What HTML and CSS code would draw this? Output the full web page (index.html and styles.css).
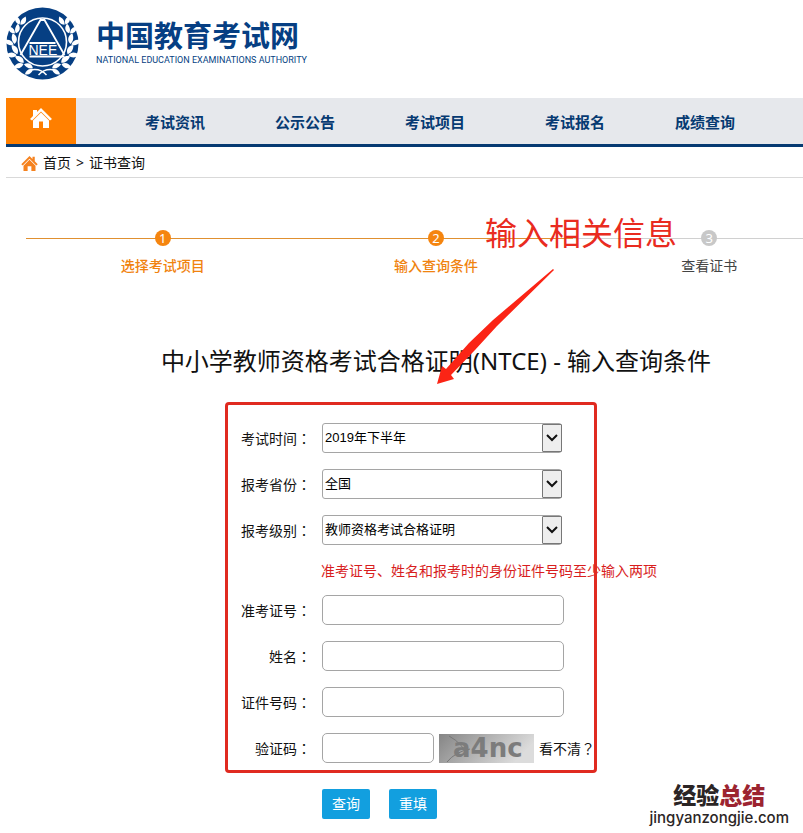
FILE: index.html
```html
<!DOCTYPE html>
<html lang="zh-CN">
<head>
<meta charset="utf-8">
<title>中国教育考试网 - 证书查询</title>
<link rel="stylesheet" href="styles.css">
</head>
<body>
<div class="page">
  <header class="header">
    <svg class="logo" viewBox="0 0 73 73" aria-hidden="true">
      <defs>
        <g id="leaf">
          <path d="M0 0C-5-1-6-5-4-9C-1-7 1-4 0 0Z"/>
          <path d="M1 0C0-4 2-7 6-8C7-4 5-1 1 0Z"/>
        </g>
        <g id="branch" fill="#fff">
          <use href="#leaf" transform="rotate(160) translate(0 -28) rotate(-70)"/>
          <use href="#leaf" transform="rotate(138) translate(0 -28) rotate(-60) scale(1.1)"/>
          <use href="#leaf" transform="rotate(116) translate(0 -28) rotate(-60) scale(1.1)"/>
          <use href="#leaf" transform="rotate(94) translate(0 -28) rotate(-60) scale(1.1)"/>
          <use href="#leaf" transform="rotate(72) translate(0 -28) rotate(-60)"/>
          <use href="#leaf" transform="rotate(52) translate(0 -28) rotate(-60)"/>
          <path d="M-4 33Q2 26 12 28" fill="none" stroke="#fff" stroke-width="1.4"/>
        </g>
      </defs>
      <circle cx="36.500" cy="36.500" r="36" fill="#063f83"/>
      <g transform="translate(36.5 35)">
        <use href="#branch"/>
        <use href="#branch" transform="scale(-1 1)"/>
        <circle r="24" fill="#063f83" stroke="#fff" stroke-width="1.600"/>
        <path d="M-22 13L-2-22H2L22 13M-13 1H13M-13 14.500H22" fill="none" stroke="#fff" stroke-width="1.800"/>
        <text x="-14" y="13" class="logo-text">NEE</text>
      </g>
    </svg>
    <div class="brand">
      <div class="brand-cn">中国教育考试网</div>
      <div class="brand-en">NATIONAL EDUCATION EXAMINATIONS AUTHORITY</div>
    </div>
  </header>

  <nav class="nav">
    <a class="nav-home" href="#" aria-label="首页">
      <svg viewBox="0 0 22 20" width="22" height="20" aria-hidden="true"><path fill="#fff" d="M0 11L3 8V2H7V4L11 0L22 11L20 12.500L11 3.500L2 12.500ZM3 12.500L11 4.500L19 12.500V20H13V13.500H9V20H3Z"/></svg>
    </a>
    <div class="nav-group">
      <a href="#">考试资讯</a><a href="#">公示公告</a><a href="#">考试项目</a>
    </div>
    <div class="nav-group">
      <a href="#">考试报名</a><a href="#">成绩查询</a>
    </div>
  </nav>

  <div class="crumbs">
    <svg viewBox="0 0 22 20" width="17" height="15" aria-hidden="true"><path fill="#f5821f" d="M0 11L11 0L15 4V1H18V7L22 11L20 12.500L11 3.500L2 12.500ZM3 13L11 5L19 13V20H13.500V13.500H8.500V20H3Z"/></svg>
    <a href="#">首页</a><span>&gt;</span><span>证书查询</span>
  </div>

  <main class="main">
    <ol class="steps">
      <li class="step done"><span class="dot">1</span><span class="step-name">选择考试项目</span></li>
      <li class="step done"><span class="dot">2</span><span class="step-name">输入查询条件</span></li>
      <li class="step"><span class="dot">3</span><span class="step-name">查看证书</span></li>
    </ol>
    <h1>中小学教师资格考试合格证明(NTCE) - 输入查询条件</h1>

    <form class="query">
      <div class="fields">
        <div class="row">
          <label for="time">考试时间<span class="punct" lang="zh-TW">：</span></label>
          <div class="select"><select id="time"><option>2019年下半年</option></select><svg viewBox="0 0 18 26" aria-hidden="true"><path d="M4 10L9 15L14 10"/></svg></div>
        </div>
        <div class="row">
          <label for="province">报考省份<span class="punct" lang="zh-TW">：</span></label>
          <div class="select"><select id="province"><option>全国</option></select><svg viewBox="0 0 18 26" aria-hidden="true"><path d="M4 10L9 15L14 10"/></svg></div>
        </div>
        <div class="row">
          <label for="level">报考级别<span class="punct" lang="zh-TW">：</span></label>
          <div class="select"><select id="level"><option>教师资格考试合格证明</option></select><svg viewBox="0 0 18 26" aria-hidden="true"><path d="M4 10L9 15L14 10"/></svg></div>
        </div>
        <p class="hint">准考证号、姓名和报考时的身份证件号码至少输入两项</p>
        <div class="row"><label for="ticket">准考证号<span class="punct" lang="zh-TW">：</span></label><input id="ticket" type="text"></div>
        <div class="row"><label for="name">姓名<span class="punct" lang="zh-TW">：</span></label><input id="name" type="text"></div>
        <div class="row"><label for="idno">证件号码<span class="punct" lang="zh-TW">：</span></label><input id="idno" type="text"></div>
        <div class="row">
          <label for="code">验证码<span class="punct" lang="zh-TW">：</span></label>
          <div class="code">
            <input id="code" type="text">
            <svg class="captcha" viewBox="0 0 95 29" width="95" height="29" role="img" aria-label="验证码图片">
              <defs><linearGradient id="shade" x1="0" y1="0" x2="1" y2="0.300"><stop offset="0" stop-color="#858585"/><stop offset="1" stop-color="#dcdcdc"/></linearGradient></defs>
              <rect width="95" height="29" fill="url(#shade)"/>
              <path d="M10 2Q24 10 27 20M8 28Q16 18 31 15" fill="none" stroke="#777" stroke-width="1"/>
              <text x="14" y="23" class="captcha-text">a4nc</text>
            </svg>
            <a href="#">看不清<span class="punct" lang="zh-TW">？</span></a>
          </div>
        </div>
      </div>
      <div class="actions">
        <button type="submit">查询</button>
        <button type="reset">重填</button>
      </div>
    </form>

    <div class="note">输入相关信息</div>
    <svg class="arrow" viewBox="0 0 120 118" width="120" height="118" aria-hidden="true"><path fill="#fb2415" d="M1 117L6 99L10 102L33 76L57 53L117 2L118 3L61 59L39 83L15 108L18 112Z"/></svg>
  </main>
</div>
<div class="mark">
  <div class="mark-cn">经验<span>总结</span></div>
  <div class="mark-url">jingyanzongjie.com</div>
</div>
</body>
</html>
```
FILE: styles.css
```css
* { box-sizing: border-box; }

body {
  margin: 0;
  position: relative;
  min-height: 100vh;
  overflow-x: hidden;
  background: #fff;
  color: #111;
  font: 14px/20px "Noto Sans", "Noto Sans CJK SC", sans-serif;
}

a { color: inherit; text-decoration: none; }

.page {
  min-width: 866px;
  padding-left: 6px;
}

.header {
  display: flex;
  gap: 17px;
  padding: 7px 0 18px;
}
.logo { width: 73px; height: 73px; }
.logo-text { font: 14px "Liberation Sans", sans-serif; fill: #fff; }
.brand { padding-top: 10px; color: #063f83; }
.brand-cn { font-size: 29px; line-height: 38px; font-weight: 700; }
.brand-en { font: 9px/10px Roboto, "Liberation Sans", sans-serif; }

.nav {
  display: flex;
  height: 49px;
  gap: 10px;
  background: #e6e8ec;
  border-bottom: 3px solid #063a72;
  color: #063a72;
  font-size: 15px;
  font-weight: 700;
}
.nav-home {
  display: flex;
  justify-content: center;
  width: 70px;
  margin-right: 24px;
  padding-top: 10px;
  background: #ff7f00;
}
.nav-group { display: flex; }
.nav-group a { width: 130px; line-height: 48px; text-align: center; }

.crumbs {
  display: flex;
  align-items: center;
  gap: 5px;
  height: 31px;
  padding: 2px 0 0 15px;
  border-bottom: 1px solid #d9d9d9;
}

.main { position: relative; padding: 50px 20px 0; }

.steps {
  display: flex;
  margin: 0;
  padding: 0;
  list-style: none;
}
.step {
  flex: 1;
  display: grid;
  justify-items: center;
  gap: 10px;
  color: #444;
  background: linear-gradient(#d0d0d0, #d0d0d0) 0 10px / 100% 1px no-repeat;
}
.step.done {
  color: #f0830f;
  background-image: linear-gradient(#e09030, #e09030);
}
.done .step-name { font-weight: 500; }
.dot {
  width: 16px;
  height: 16px;
  margin-top: 2px;
  border-radius: 50%;
  background: #c8c8c8;
  color: #fff;
  font-size: 13px;
  line-height: 16px;
  text-align: center;
}
.done .dot { background: #f5850f; }

h1 {
  margin: 70px 0 0;
  font-size: 24px;
  line-height: 30px;
  font-weight: 400;
  text-align: center;
  white-space: nowrap;
}

.query { width: 390px; margin: 47px auto 0; }
.fields {
  position: relative;
  display: grid;
  gap: 16px;
}
.fields::after {
  content: "";
  position: absolute;
  inset: -21px 34px -10px -16px;
  border: 3px solid #e02a20;
  border-radius: 4px;
  pointer-events: none;
}
.row {
  display: grid;
  grid-template-columns: 70px 1fr;
  column-gap: 11px;
  align-items: center;
}
.row label { text-align: right; white-space: nowrap; }
.punct { font-family: "Noto Sans CJK TC", sans-serif; }
input, select {
  width: 242px;
  height: 30px;
  border: 1px solid #a5a5a5;
  border-radius: 5px;
  background: #fff;
  font: inherit;
}
.select { position: relative; width: 240px; height: 30px; }
select {
  width: 100%;
  padding: 0 22px 2px 2px;
  border-radius: 3px;
  appearance: none;
  color: #000;
  font: 13px "Liberation Sans", "Noto Sans CJK SC", sans-serif;
}
.select svg {
  position: absolute;
  top: 1px;
  right: 0;
  width: 20px;
  height: 28px;
  border: 1px solid #777;
  border-radius: 1px;
  background: #eee;
  fill: none;
  stroke: #111;
  stroke-width: 2px;
  pointer-events: none;
}
.hint {
  margin: 0 0 -2px 80px;
  color: #d81e1e;
  white-space: nowrap;
}
.code { display: flex; align-items: center; gap: 5px; white-space: nowrap; }
.code input { width: 112px; }
.captcha-text { font: 700 26px "DejaVu Sans", sans-serif; fill: #7c7c7c; }

.actions { display: flex; gap: 19px; padding: 26px 0 0 81px; }
button {
  width: 48px;
  height: 30px;
  padding: 0;
  border: 0;
  border-radius: 2px;
  background: #129fdf;
  color: #fff;
  font: inherit;
}

.note {
  position: absolute;
  top: 35px;
  left: 479px;
  color: #e92b20;
  font-size: 32px;
  line-height: 40px;
}
.arrow { position: absolute; top: 89px; left: 430px; }

.mark {
  position: absolute;
  right: 14px;
  bottom: 6px;
  text-align: center;
  color: #2b2525;
}
.mark-cn { font-size: 23px; line-height: 28px; font-weight: 900; }
.mark-cn span { color: #9c2430; }
.mark-url { font: 500 15px/18px Inter, sans-serif; }
```
